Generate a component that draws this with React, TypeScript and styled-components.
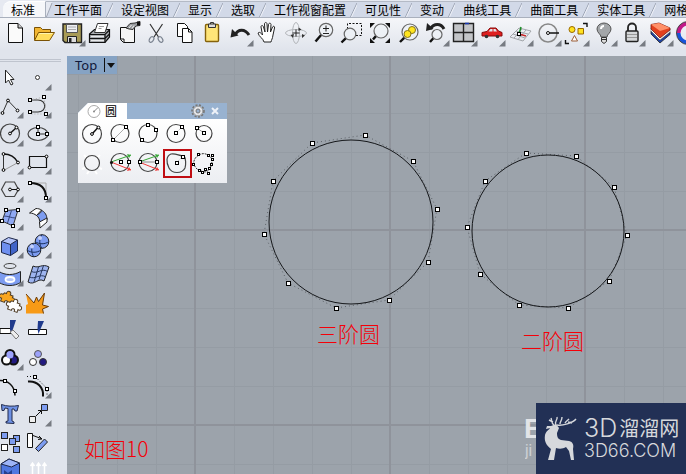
import React, { ReactNode } from "react";
import styled, { createGlobalStyle, css } from "styled-components";

const GlobalStyle = createGlobalStyle`
  * { box-sizing: border-box; }
  body {
    margin: 0;
    overflow: hidden;
    background: #e0e4ec;
    font-family: "Noto Sans CJK SC", "Noto Sans", sans-serif;
  }
  button {
    margin: 0;
    padding: 0;
    border: 0;
    background: none;
    font: inherit;
    color: inherit;
  }
`;

const Window = styled.div`
  display: flex;
  flex-direction: column;
  height: 100vh;
  overflow: hidden;
`;

const TabStrip = styled.nav`
  display: flex;
  flex: none;
  height: 18px;
  padding: 1px 0 0 3px;
  background: #e6e9f1;
  border-bottom: 1px solid #a9b0bd;
  overflow: hidden;
`;

const Tab = styled.button<{ $active: boolean }>`
  display: flex;
  flex: none;
  height: 17px;
  font-size: 12px;
  line-height: 16px;
  color: #000;
  white-space: nowrap;
  background: ${(p) => (p.$active ? "#f6f7fa" : "#d2d9e8")};
  border-top: 1px solid ${(p) => (p.$active ? "#fff" : "#b4bac6")};
  ${(p) =>
    p.$active &&
    css`
      border-right: 1px solid #a9b0bd;
      border-top-left-radius: 8px;
    `}
`;

const TabEdge = styled.svg<{ $width: number }>`
  flex: none;
  width: ${(p) => p.$width}px;
  height: 16px;
`;

const Toolbar = styled.div`
  display: flex;
  flex: none;
  height: 38px;
  padding: 1px 0 0 2px;
  overflow: hidden;
  background: linear-gradient(#f5f6f9, #e0e4ec 32px);
`;

const ToolButton = styled.button`
  flex: none;
  width: 28px;
  height: 28px;
`;

const Glyph = styled.svg`
  display: block;
  width: 28px;
  height: 28px;
  overflow: visible;
`;

const Body = styled.div`
  display: flex;
  flex: 1;
  min-height: 0;
`;

const Sidebar = styled.aside`
  flex: none;
  width: 67px;
  padding-top: 3px;
  overflow: hidden;
  background: #e0e4ec;
`;

const Grip = styled.div`
  width: 61px;
  height: 3px;
  margin-bottom: 1px;
  border: solid #bfc4ce;
  border-width: 1px 0;
`;

const ToolColumns = styled.div`
  display: grid;
  grid-template-columns: 28px 28px;
  margin-left: -4px;
`;

const Viewport = styled.main`
  position: relative;
  flex: 1;
  min-width: 0;
  overflow: hidden;
  background-color: #9ca3ab;
  background-image:
    repeating-linear-gradient(90deg, transparent 0 127px, #8f939b 127px 129px, transparent 129px 195px),
    repeating-linear-gradient(180deg, transparent 0 173px, #8f939b 173px 175px, transparent 175px 195px),
    repeating-linear-gradient(90deg, transparent 0 11px, #959ca4 11px 12px, transparent 12px 39px),
    repeating-linear-gradient(180deg, transparent 0 18px, #959ca4 18px 19px, transparent 19px 39px);
`;

const ViewTitle = styled.button`
  position: relative;
  z-index: 1;
  display: flex;
  align-items: center;
  gap: 7px;
  height: 18px;
  padding: 0 1px 0 8px;
  background: #86a3c4;
  color: #10183a;
  font: 13px/18px "Noto Sans", sans-serif;
`;

const Drawing = styled.svg`
  position: absolute;
  left: 0;
  top: 0;
  width: 619px;
  height: 418px;
`;

const Caption = styled.span<{ $x: number; $y: number }>`
  position: absolute;
  left: ${(p) => p.$x}px;
  top: ${(p) => p.$y}px;
  color: #f50008;
  font-size: 21px;
  font-weight: 300;
  line-height: 24px;
  white-space: nowrap;
`;

const Palette = styled.section`
  position: absolute;
  left: 11px;
  top: 47px;
  width: 149px;
  height: 80px;
  clip-path: polygon(10px 0, 100% 0, 100% 100%, 0 100%, 0 10px);
  background: linear-gradient(#fff 16px, #eceef2);
`;

const PaletteHeader = styled.header`
  display: flex;
  align-items: center;
  height: 16px;
  padding-right: 4px;
  background: #98b2d0;
`;

const PaletteTitle = styled.h2`
  display: flex;
  align-items: center;
  gap: 4px;
  width: 49px;
  height: 16px;
  margin: 0 auto 0 0;
  padding-left: 9px;
  background: #fff;
  font-size: 12px;
  font-weight: 400;
  line-height: 16px;
`;

const HeaderButton = styled.button`
  width: 17px;
  height: 16px;
  svg { display: block; margin: auto; }
`;

const PaletteGrid = styled.div`
  display: grid;
  grid-template-columns: repeat(5, 28px);
  row-gap: 1px;
  padding-top: 1px;
`;

const Watermark = styled.div`
  position: absolute;
  right: 0;
  bottom: 0;
  display: flex;
  align-items: center;
  gap: 5px;
  width: 150px;
  height: 71px;
  padding-left: 7px;
  background: #223055;
  color: #d6d8dc;
`;

const Brand = styled.div`
  display: flex;
  flex-direction: column;
  font-family: Inter, sans-serif;
  font-weight: 300;
  white-space: nowrap;
`;

const BrandName = styled.div`
  display: flex;
  align-items: center;
  gap: 2px;
  height: 24px;
  font-size: 25px;
  line-height: 24px;
`;

const BrandHan = styled.span`
  font-family: "Noto Sans CJK SC", sans-serif;
  font-size: 20px;
  font-weight: 400;
`;

const BrandSite = styled.div`
  font-size: 18px;
  line-height: 22px;
`;

const Ghost = styled.div`
  position: absolute;
  right: 150px;
  bottom: 14px;
  width: 11px;
  overflow: hidden;
  color: #e2e4e7;
  font-family: "Liberation Sans", sans-serif;
`;

const GhostBig = styled.div`
  font-size: 28px;
  font-weight: 700;
  line-height: 26px;
  margin-left: -1px;
`;

const GhostSmall = styled.div`
  font-size: 16px;
  line-height: 18px;
  opacity: 0.7;
`;

const K = "#111";
const BLUE = "#7d9cf0";

type Pt = [number, number];

const Squares = ({ at, s = 3 }: { at: Pt[]; s?: number }) => (
  <>
    {at.map(([x, y], i) => (
      <rect key={i} x={Math.round(x) - 1.5} y={Math.round(y) - 1.5} width={s} height={s} fill="#fff" stroke="#000" strokeWidth="1" />
    ))}
  </>
);

const Lens = ({ x, y, r, hx, hy }: { x: number; y: number; r: number; hx: number; hy: number }) => (
  <>
    <path d={`M${x - r * 0.7} ${y + r * 0.7}L${hx} ${hy}`} stroke="#111" strokeWidth="2.4" />
    <circle cx={x} cy={y} r={r} fill="#eef2f6" fillOpacity=".7" stroke="#666" strokeWidth="1.2" />
  </>
);

const Ring = ({ x = 14, y = 14, r = 9 }: { x?: number; y?: number; r?: number }) => (
  <circle cx={x} cy={y} r={r} stroke="#444" strokeWidth="1.2" />
);

type Tool = { name: string; art: ReactNode; menu?: boolean };

const ToolItem = ({ tool }: { tool: Tool }) => (
  <ToolButton type="button" aria-label={tool.name}>
    <Glyph viewBox="0 0 28 28" fill="none" aria-hidden="true">
      {tool.art}
      {tool.menu && <path d="M27.5 21v6.500h-6.500z" fill="#777b82" />}
    </Glyph>
  </ToolButton>
);

const standardTools: Tool[] = [
  { name: "新建", art: <><path d="M6.500 4.500h9.500l4.500 4.500v14.500h-14z" fill="#fafafa" stroke={K} /><path d="M16 4.500v4.500h4.500" fill="#ccc" stroke={K} /></> },
  { name: "打开", art: <><path d="M4.500 21V8.500h6l2 2h8v3" fill="#f2b632" stroke="#7b5205" /><path d="M4.500 21.500l4-8H24.500l-5 8z" fill="#ffdc5c" stroke="#7b5205" /><path d="M9.500 14.500h13" stroke="#fff4b0" /></> },
  { name: "保存", menu: true, art: <><path d="M5 5h18.500v18.500H7l-2-2z" fill="#a89b56" stroke="#222" strokeWidth="1.4" /><path d="M8.500 5.500h11v8h-11z" fill="#eef0f4" stroke="#555" /><path d="M10 8h8M10 10.500h8" stroke="#aaa" /><path d="M9.500 17.500h9v6h-9z" fill="#ddd" stroke="#222" /><path d="M11 19h2.500v4H11z" fill="#222" /></> },
  { name: "打印", art: <><path d="M3.500 15l5-4.500h15v7.500l-4.500 5.500h-15.500z" fill="#a9acb0" stroke={K} strokeWidth="1.2" /><path d="M8.500 13.500l3-9h10.500l-3 9z" fill="#fff" stroke="#333" /><path d="M13 7.500h5M12.500 9.500h3" stroke="#999" /><path d="M3.500 15.500h15.500l4.500-4.500M19 15.500v8M3.500 19.500h15.500l4.500-4.500" stroke={K} strokeWidth="1.2" /><path d="M5 17.500h13M5 21.500h13" stroke="#e8e9eb" /></> },
  { name: "文件属性", art: <><path d="M6.500 8.500h14v15h-11l-3-3z" fill="#f5f5f5" stroke={K} /><path d="M6.500 20h3.500v3.500" stroke={K} /><path d="M12 9l4-4.500 5-.5 5-1.500v4l-4 .5-3 3.500-4-.5z" fill="#999ca0" stroke="#333" /><path d="M15 9l2.500-3M18 9.500l2-3" stroke="#eee" /><path d="M24.500 2.500v4" stroke="#111" strokeWidth="3" /></> },
  { name: "剪切", art: <><path d="M8 5l8.500 13M20.500 5L12 18" stroke="#333" strokeWidth="1.2" /><ellipse cx="9.500" cy="20.500" rx="2" ry="3" transform="rotate(35 9.500 20.500)" stroke="#7d8592" strokeWidth="1.2" /><ellipse cx="18.500" cy="20.500" rx="2" ry="3" transform="rotate(-35 18.500 20.500)" stroke="#7d8592" strokeWidth="1.2" /></> },
  { name: "复制", art: <><path d="M7.500 4.500h7l3 3v10h-10z" fill="#fff" stroke={K} /><path d="M12.500 9.500h6l3.500 3.500v10.500h-9.500z" fill="#fff" stroke={K} /><path d="M18.500 9.500V13H22" stroke={K} /></> },
  { name: "粘贴", art: <><rect x="7.500" y="5.500" width="13" height="17" rx="1" fill="#ffe578" stroke="#85620b" strokeWidth="1.4" /><path d="M10.500 5h7v3.500h-7z" fill="#ddd" stroke="#333" /><path d="M12.500 5V3.500h3V5" stroke="#333" /></> },
  { name: "复原", menu: true, art: <><path d="M9 16C12 9.500 19 9.500 23 16" stroke="#222" strokeWidth="3" /><path d="M4.500 18.500l1.500-8.500 6.500 6.500z" fill="#222" /></> },
  { name: "平移", art: <path d="M10 23c-1-4-5-5-6-9 1.500-1.500 3 0 4.500 2L7 8c0-2 2-2 2.500 0l1.500 5-.5-8c0-2 2.500-2 2.500 0l.5 8 1-7.500c.5-2 2.500-1.500 2.500 0L16.500 13l2-5c1-1.500 2.500-.5 2 1l-1.500 7c-.5 4-1.500 4.500-2 7z" fill="#fff" stroke="#222" /> },
  { name: "旋转视图", art: <><ellipse cx="14" cy="14" rx="10.500" ry="3.500" stroke="#b2b5b9" /><ellipse cx="14" cy="14" rx="3.500" ry="10.500" stroke="#b2b5b9" /><path d="M14 10.500v7M10.500 14h7" stroke="#222" /><path d="M16.500 8.500l3 2-3 1.500zM8.500 16l3.500-1-1 4zM20 15v4l3-2.500z" fill="#333" /></> },
  { name: "缩放", art: <><Lens x={16} y={11} r={6.7} hx={5.5} hy={22.5} /><path d="M16 6.500v6M13 9.500h6M13 14.500h6" stroke="#222" /></> },
  { name: "框选缩放", art: <><path d="M9.500 10V4.500h14v12H18" stroke={K} strokeDasharray="2 1.500" /><Lens x={12} y={15} r={5.8} hx={3.5} hy={23.500} /></> },
  { name: "缩放至最大范围", art: <><Lens x={15} y={12} r={7} hx={7} hy={20.500} /><path d="M4 4h5l-5 5zM24 4v5l-5-5zM4 24v-5l5 5zM24 24h-5l5-5z" fill={K} /></> },
  { name: "缩放至选取", art: <><Lens x={16} y={13} r={8} hx={6} hy={23} /><circle cx="18" cy="11" r="3.500" fill="#ffe51e" stroke="#86751a" /><circle cx="13.500" cy="15" r="3.500" fill="#ffe51e" stroke="#86751a" /></> },
  { name: "复原视图", menu: true, art: <><path d="M8 10C12 4 19 4 22 10" stroke="#222" strokeWidth="3" /><path d="M4 12l1-8 6.500 6z" fill="#222" /><Lens x={15} y={15.500} r={5} hx={8} hy={23} /></> },
  { name: "四个视图", menu: true, art: <><path d="M3.500 4.500h20v18h-20z" fill="#c3c5c8" stroke="#222" strokeWidth="1.400" /><path d="M13.500 4.500v18M3.500 13.500h20" stroke="#222" strokeWidth="1.400" /><path d="M15 4.500h4" stroke="#1736b0" strokeWidth="1.500" /></> },
  { name: "设置视图", menu: true, art: <><path d="M4 13.500l5-1 3-3.500h6l2.500 3 3.500 1.500v3.500H4z" fill="#df2020" stroke="#860b0b" /><path d="M10.500 12.500l2-2.500h2v2.500zM15.500 10h2l1.500 2.500h-3.500z" fill="#dfe8f0" /><circle cx="8.500" cy="17.500" r="1.800" fill="#333" /><circle cx="19.500" cy="17.500" r="1.800" fill="#333" /></> },
  { name: "工作平面", menu: true, art: <><path d="M4 18l9-9 12 3-8 10zM7 15l12 4M10 12l12 3M8 19l8-9M12 20.500l8-9.500" stroke="#a2a6aa" /><path d="M13 15l2-7" stroke="#188b25" strokeWidth="1.500" /><path d="M13 15l7 2" stroke="#c62626" strokeWidth="1.500" /><Squares at={[[12.500, 15]]} /></> },
  { name: "对象捕捉", menu: true, art: <><circle cx="14" cy="14" r="9" stroke="#888" strokeWidth="1.500" /><path d="M14 14h11" stroke={K} strokeWidth="1.500" /><circle cx="14" cy="14" r="1.500" fill="#fff" stroke={K} /></> },
  { name: "选取", menu: true, art: <><circle cx="10" cy="10.500" r="3" fill="#ffe21f" stroke="#9a6900" /><path d="M16 9.500h5.500V15H16z" fill="#ffe21f" stroke="#9a6900" /><path d="M12.500 16.500l3 5.500h-6z" fill="#fff" stroke="#9a5d37" /><path d="M21 4.500h4v3.500M3.500 21v3.500H7" stroke={K} strokeWidth="1.400" /></> },
  { name: "隐藏物件", menu: true, art: <><path d="M11 18c0-3-4-4-4-8a7 6 0 0 1 14 0c0 4-4 5-4 8z" fill="#a3a6a9" stroke="#555" /><path d="M11 10a3 3 0 0 1 3-3" stroke="#fff" strokeWidth="2" /><path d="M11.500 18.500h5v4l-2.500 2-2.500-2z" fill="#ddd" stroke="#333" /><path d="M11.500 20.500h5" stroke="#333" /></> },
  { name: "锁定物件", menu: true, art: <><path d="M10 13V8.500a4 4 0 0 1 8 0V13" stroke="#222" strokeWidth="1.800" /><rect x="8" y="12" width="12" height="10.500" rx="1" fill="#d5d7d9" stroke="#222" strokeWidth="1.400" /><path d="M9 15.500h10M9 18.500h10" stroke="#999" /></> },
  { name: "图层", menu: true, art: <><path d="M5 12l9 9 10-8v2.500L14 24 5 15z" fill="#1e43a6" stroke="#222" strokeWidth=".8" /><path d="M5 9l9 9 10-8v3l-10 8-9-9z" fill="#fff" stroke="#555" strokeWidth=".5" /><path d="M5 5.500l8-1.500 11 5v2l-10 8-9-9z" fill="#e2401c" stroke="#7a1b10" strokeWidth=".8" /><path d="M5 5.500l8-1.500 11 5-10 3z" fill="#ff9068" /></> },
  { name: "颜色", art: <><path d="M14 4.500a9.500 9.500 0 0 0-9.500 9.500" stroke="#c21989" strokeWidth="4" /><path d="M4.500 14a9.500 9.500 0 0 0 9.500 9.500" stroke="#1754d9" strokeWidth="4" /><circle cx="14" cy="14" r="11.500" stroke="#444" /></> },
];

const sideTools: Tool[] = [
  { name: "取消选取", art: <path d="M9.500 7v13l3-3 2.500 5 2-1-2.500-4.500H18z" fill="#fff" stroke="#222" /> },
  { name: "点", menu: true, art: <circle cx="13.500" cy="14.500" r="2" fill="#fff" stroke="#333" /> },
  { name: "多重直线", menu: true, art: <><path d="M6.500 22L12 9.500l9.500 10" stroke="#333" /><Dots at={[[6.500, 22], [12, 9.500], [21.500, 19.500]]} /></> },
  { name: "曲线", menu: true, art: <><path d="M6 9h8c9 0 9 12 0 12H6" stroke="#333" strokeWidth="1.200" /><path d="M6 9l14-3 2 17H6" stroke="#aaa" strokeDasharray="1 2" /><Squares at={[[6, 9], [20, 6], [6, 21], [22, 23]]} /></> },
  { name: "圆", menu: true, art: <><Ring y={14.5} r={9.5} /><path d="M14 14.500l6.500-6" stroke={K} strokeWidth="1.400" /><Dots at={[[14, 14.500], [20.500, 8.500]]} /></> },
  { name: "椭圆", menu: true, art: <><ellipse cx="14" cy="15" rx="10" ry="6.500" stroke="#444" strokeWidth="1.200" /><path d="M14 8v7h9" stroke="#333" /><Squares at={[[14, 8], [14, 15], [23, 15]]} /></> },
  { name: "圆弧", menu: true, art: <><path d="M7.500 23.500V7" stroke="#333" /><path d="M7.500 7C14 7 19 10 22 15.500" stroke={K} strokeWidth="1.400" /><path d="M7.500 23.500l14.500-8" stroke="#999" /><Dots at={[[7.500, 7], [22, 15.500], [7.500, 23]]} /></> },
  { name: "矩形", menu: true, art: <><path d="M5.500 9.500h17v11h-17z" stroke={K} strokeWidth="1.200" /><Dots at={[[5.500, 20.500], [22.500, 9.500]]} /></> },
  { name: "多边形", menu: true, art: <><path d="M9.500 7h9l4 7.500-4 7h-9l-4-7z" stroke="#444" strokeWidth="1.200" /><path d="M14 14.500h7.500" stroke={K} /><Dots at={[[14, 14.500], [22, 14.500]]} /></> },
  { name: "曲线圆角", menu: true, art: <><path d="M6 8h16v15" stroke="#aaa" /><path d="M6 8c10 0 16 4 16 15" stroke={K} strokeWidth="2" /><Squares at={[[6, 8], [22, 23]]} /></> },
  { name: "曲面", menu: true, art: <><path d="M10 7c4 1 8-1 12 0l-5 16-11-5z" fill="#8fa8f2" stroke="#333" /><path d="M15.500 7.500L11.500 20M8 13c4 0 8 2 11.500 2" stroke="#37477c" /><Squares at={[[10, 7], [22, 7], [17, 23], [6, 18]]} /></> },
  { name: "混接曲面", menu: true, art: <><path d="M12 12c4-1 6-3 5-5 4 2 6 5 6 10l-7 4c0-4-1-7-4-9z" fill={BLUE} stroke="#222" /><path d="M5.500 10L12 5.500c2 0 4 .5 5.500 1.500l-5 5.500c-2-1.500-4-2.500-7-2.500zM15.500 19l7.500-4v4l-7 6z" fill="#fff" stroke="#222" /></> },
  { name: "立方体", menu: true, art: <Cube /> },
  { name: "球体", menu: true, art: <><circle cx="18" cy="10.500" r="6.800" fill={BLUE} stroke="#222" /><path d="M11 10.500c4 3 10 3 14 0M18 3.500c-3 4-3 10 0 14" stroke="#19305f" /><circle cx="16" cy="7" r="2" fill="#c3d0fa" /><circle cx="10" cy="19" r="6.800" fill={BLUE} stroke="#222" /><path d="M3 19c4 3 10 3 14 0M10 12c-3 4-3 10 0 14" stroke="#19305f" /><circle cx="8" cy="15.500" r="2" fill="#c3d0fa" /></> },
  { name: "投影曲线", menu: true, art: <><ellipse cx="14" cy="7" rx="6" ry="2.500" stroke="#444" /><path d="M3 12.500c6 4 15 4 21.500 0v11c-6 4-15 4-21.500 0z" fill={BLUE} stroke="#222" /><ellipse cx="14" cy="20.500" rx="4.500" ry="2.500" fill="#b8c8f8" stroke="#fff" strokeWidth="1.800" /></> },
  { name: "网格", menu: true, art: <><path d="M9 7c6 3 9-3 16 1l-5 14c-6-4-9 5-16 1z" fill="#9eb4ef" stroke="#222" /><path d="M14.500 8l-4.500 15M19.500 6.500L15 20.500M7.500 12.500c6 3 10-4 16 0M5.500 18c6 3 10-4 16.500 0" stroke="#26365c" /></> },
  { name: "组合", art: <><Puzzle x={11} y={11} fill="#f9a51e" /><Puzzle x={18} y={19} fill="#fff" /></> },
  { name: "炸开", art: <><path d="M2 26.500V18l2-1L2 7l8 9 2.500-6 2 4.500L20.500 6l-2 12 6 1.500-6 2.500 1 4.500z" fill="#f79a16" /><path d="M2 7l8 9 2.500-6 2 4.500L20.500 6l-2 12 6 1.500-6 2.500 1 4.500" stroke="#6b3b08" /></> },
  { name: "修剪", art: <><path d="M4 13.500h11v5H4z" fill="#fff" stroke={K} /><path d="M14 5h6l-4 12-2-2z" fill="#203b8d" /><path d="M14 17l3-2 6 6-3 3z" fill="#eee" stroke="#777" /></> },
  { name: "分割", art: <><path d="M4.500 14.500h18v5h-18z" fill="#fff" stroke={K} /><path d="M14 6h6l-3.500 8-2 5-1-5z" fill="#203b8d" /></> },
  { name: "群组", menu: true, art: <><circle cx="14" cy="11.500" r="4.500" fill="#9ca2fa" stroke={K} strokeWidth="2" /><circle cx="17.500" cy="17" r="4.500" fill="#221a80" stroke={K} strokeWidth="2" /><circle cx="10.500" cy="17" r="4.500" fill="#fff" stroke={K} strokeWidth="2" /><circle cx="14" cy="12" r="3.500" fill="#9ca2fa" /></> },
  { name: "解散群组", art: <><circle cx="14" cy="11" r="3.500" fill="#9ca2fa" stroke="#555" /><circle cx="9" cy="19" r="3.500" fill="#fff" stroke="#333" /><circle cx="19" cy="19" r="3.500" fill="#221a80" stroke="#333" /></> },
  { name: "编辑点", art: <><path d="M3 9.500c9-1 16 6 16 15" stroke={K} strokeWidth="1.500" /><Squares at={[[9, 10], [19, 20]]} /></> },
  { name: "控制点", menu: true, art: <><path d="M3 5.500h8l12 12v7" stroke={K} strokeDasharray="1 2" /><path d="M4 10.500c9-1 16 6 15 15" stroke={K} strokeWidth="2" /><Squares at={[[11, 6], [23, 18]]} /></> },
  { name: "文字", art: <path d="M5.500 5.500c5 2 12 2 17 1l-1.500 5.500h-2l-1-2h-2v12l2 1v1.500l-8-.5v-1.500l2-.5V9.500l-3-.5-1 2.500h-2z" fill="#6e91e4" stroke="#222b4c" /> },
  { name: "移动", menu: true, art: <><path d="M12 17l5-5M14 11.500h3.500V15" stroke={K} /><path d="M17.500 5.500h6v6h-6z" fill={BLUE} stroke="#222" /><path d="M5.500 17.500h6v6h-6z" fill="#eee" stroke="#222" /></> },
  { name: "阵列", art: <>{([[8.5, 8.5], [20.5, 11.5], [16.5, 14.5], [8.5, 20.5], [20.5, 22.5]] as Pt[]).map(([x, y], i) => <rect key={i} x={x - 3} y={y - 3} width="6" height="6" fill={i === 3 ? "#fff" : BLUE} stroke="#222" />)}</> },
  { name: "旋转", art: <><path d="M3.500 6.500h5v14h-5z" fill="#fff" stroke={K} /><path d="M9 8.500l8 3M14 12.500l4-.5-3-3" stroke={K} /><path d="M11.500 21.500l9-9.500 3 3-9 9.500z" fill={BLUE} stroke="#222" /></> },
  { name: "布尔运算", art: <><path d="M5 9l8-5 10.500 4v16H5z" fill="#4f77e0" stroke="#1d2748" /><path d="M5 9l8-5 10.500 4-8 4z" fill="#9db4f7" stroke="#1d2748" /><path d="M8 21v-6l4 3 4-3v6" fill="#24408f" /></> },
  { name: "分析方向", art: <path d="M8.500 20V9M14.500 20V9M20.500 20V9M6.500 11l2-3 2 3M12.500 11l2-3 2 3M18.500 11l2-3 2 3" stroke="#fff" strokeWidth="1.500" /> },
];

const circleTools: Tool[] = [
  { name: "中心点、半径", art: <><Ring r={9.5} /><path d="M14 14l6-6.500" stroke={K} strokeWidth="1.500" /><Dots at={[[14, 14], [20.500, 7.500]]} /></> },
  { name: "直径", art: <><Ring y={13.5} /><path d="M7 20L20 7" stroke="#aaa" /><Squares at={[[7, 20], [20, 7]]} /></> },
  { name: "三点", art: <><Ring y={13.5} /><Squares at={[[14, 5], [22, 10], [8, 20]]} /></> },
  { name: "环绕曲线", art: <><Ring y={13.5} /><path d="M14 13l6-6" stroke="#999" strokeDasharray="1 1" /><Squares at={[[14, 13], [20, 7]]} /></> },
  { name: "切线半径", art: <><Ring y={13.5} r={8} /><path d="M7 8l7 5" stroke="#999" /><Squares at={[[7, 8], [14, 13]]} /></> },
  { name: "正切三曲线", art: <><path d="M6 6l3 3M22 6l-3 3M4 20l3-1M24 20l-3-1M9 25l2-3M19 25l-2-3" stroke="#fff" strokeWidth="2" /><Ring r={7.5} /></> },
  { name: "可塑形直径", art: <><Ring y={13.5} /><path d="M5 13l20-7" stroke="#38a838" /><path d="M5 13l20 8" stroke="#f03838" /><path d="M25 6l-4-1 2 4z" fill="#38a838" /><path d="M25 21l-4 1 2-4z" fill="#f03838" /><circle cx="5.500" cy="13.500" r="1.500" fill={K} /><Squares at={[[15, 13], [23, 13]]} /></> },
  { name: "垂直直径", art: <><Ring y={13.5} /><path d="M5 13l20-7" stroke="#38a838" /><path d="M5 13l20 8" stroke="#f03838" /><path d="M25 6l-4-1 2 4z" fill="#38a838" /><path d="M25 21l-4 1 2-4z" fill="#f03838" /><path d="M6 13h17" stroke="#888" /><Squares at={[[6, 13], [23, 13]]} /></> },
  { name: "可塑形的圆", art: <><rect x="2" y="1" width="27" height="27" stroke="#c00d12" strokeWidth="2" /><path d="M9 5c5-1 8 2 13 2 2 2 2 9 1 12-3 6-13 6-16 0S4 7 9 5z" stroke="#444" strokeWidth="1.200" /><path d="M15 13l6-6" stroke="#aaa" strokeDasharray="1 1" /><Squares at={[[15, 14], [21, 8]]} /></> },
  { name: "配合点", art: <><path d="M9 6c3-2 7-2 10 1 4 2 3 7 2 10-2 6-6 7-10 5-3 0-5-3-7-6-1-4 1-8 5-10z" stroke="#333" strokeDasharray="2 1" /><Squares s={2} at={[[9, 6], [19, 7], [23, 7], [23, 11], [22, 16], [4, 16], [10, 22], [13, 24], [19, 25], [16, 21], [20, 20]]} /></> },
];

function Dots({ at }: { at: Pt[] }) {
  return <>{at.map(([x, y], i) => <circle key={i} cx={x} cy={y} r="1.400" fill="#fff" stroke="#000" />)}</>;
}

function Cube() {
  return (
    <>
      <path d="M5.500 10.500l9 3v11l-9-3z" fill="#6e8ff0" />
      <path d="M5.500 10.500l7-4 9 2.500-7 4.500z" fill="#b3c3f8" />
      <path d="M14.500 13.500l7-4.500v11l-7 4.500z" fill="#4164c8" />
      <path d="M5.500 10.500l7-4 9 2.500v11l-7 4.500-9-3zM5.500 10.500l9 3 7-4.500M14.500 13.500v11" stroke="#1d2748" />
    </>
  );
}

function Puzzle({ x, y, fill }: { x: number; y: number; fill: string }) {
  return (
    <path
      transform={`translate(${x} ${y}) rotate(20)`}
      d="M-4-4h2c-1-4 5-4 4 0h3v2c4-1 4 5 0 4v3H2c1-3-4-3-3 0h-4V2c-4 1-4-5 0-4z"
      fill={fill}
      stroke="#4d3b24"
    />
  );
}

const tabs = ["标准", "工作平面", "设定视图", "显示", "选取", "工作视窗配置", "可见性", "变动", "曲线工具", "曲面工具", "实体工具", "网格工具"];

const cubicPoints: Pt[] = [[365, 135], [413, 161], [437, 209], [428, 262], [389, 300], [336, 308], [288, 283], [264, 234], [273, 181], [312, 143]];
const quadraticPoints: Pt[] = [[526, 153], [576, 156], [614, 187], [627, 235], [609, 281], [568, 308], [519, 305], [480, 274], [467, 227], [485, 181]];

const Curve = ({ cx, cy, r, points }: { cx: number; cy: number; r: number; points: Pt[] }) => (
  <>
    <polygon points={points.map((p) => p.join()).join(" ")} stroke="#5d6268" strokeDasharray="1 3" />
    <circle cx={cx} cy={cy} r={r} stroke="#15171a" />
    {points.map(([x, y]) => (
      <rect key={`${x}-${y}`} x={x - 1.5} y={y - 1.5} width="4" height="4" fill="#fff" stroke="#000" />
    ))}
  </>
);

const Deer = () => (
  <svg width="36" height="46" viewBox="0 0 36 46" fill="#d6d8dc" aria-hidden="true">
    <path d="M8 10l5-2 3 4-2 5c0 4 1 6 4 7l8 1c4 1 5 4 4 8l1 11h-3l-2-9-3-4c-3 2-7 2-10 1l-2 12H5l3-11c-5-4-7-8-6-14 1-4 4-5 5-7L3 13l1-3z" />
    <path d="M11 9C8 7 9 4 8 2M13 9c-2-4 2-5 1-8M14 9c5 1 16-2 19-6M17 8c0-3 2-3 2-7M22 7c1-2 3-3 4-4M10 6L6 4M25 6l4 1" fill="none" stroke="#d6d8dc" strokeWidth="1.400" />
  </svg>
);

export default function App() {
  return (
    <Window>
      <GlobalStyle />
      <TabStrip>
        {tabs.map((label, i) => (
          <Tab key={label} type="button" $active={i === 0}>
            <TabEdge $width={8} viewBox="0 0 8 16">
              {i === 1 && <><path d="M0 16V0h6z" fill="#e6e9f1" /><path d="M0 16L6 1" stroke="#a0a7b4" /></>}
            </TabEdge>
            {label}
            <TabEdge $width={i === 0 ? 10 : 11} viewBox={i === 0 ? "0 0 10 16" : "0 0 11 16"}>
              {i > 0 && <><path d="M4 16L11 1" stroke="#9aa2b2" /><path d="M5 16l7-15" stroke="#eef1f7" /></>}
            </TabEdge>
          </Tab>
        ))}
      </TabStrip>
      <Toolbar>
        {standardTools.map((tool) => <ToolItem key={tool.name} tool={tool} />)}
      </Toolbar>
      <Body>
        <Sidebar>
          <Grip />
          <ToolColumns>
            {sideTools.map((tool) => <ToolItem key={tool.name} tool={tool} />)}
          </ToolColumns>
        </Sidebar>
        <Viewport>
          <ViewTitle type="button">
            Top
            <svg width="12" height="16" viewBox="0 0 12 16" aria-hidden="true">
              <path d="M.5 1v14" stroke="#111" />
              <path d="M3 6h8l-4 5z" fill="#111" />
            </svg>
          </ViewTitle>
          <Drawing viewBox="67 56 619 418" fill="none" aria-hidden="true">
            <Curve cx={351} cy={222} r={82} points={cubicPoints} />
            <Curve cx={548} cy={231} r={76} points={quadraticPoints} />
          </Drawing>
          <Caption $x={250} $y={265}>三阶圆</Caption>
          <Caption $x={454} $y={272}>二阶圆</Caption>
          <Caption $x={17} $y={380}>如图10</Caption>
          <Palette>
            <PaletteHeader>
              <PaletteTitle>
                <svg width="14" height="14" viewBox="0 0 14 14" fill="none" aria-hidden="true">
                  <circle cx="7" cy="7.500" r="6" stroke="#aaa" />
                  <path d="M7 7.500l4-4" stroke="#888" />
                  <circle cx="7" cy="7.500" r="1" fill="#888" />
                </svg>
                圆
              </PaletteTitle>
              <HeaderButton type="button" aria-label="选项">
                <svg width="14" height="14" viewBox="0 0 14 14" fill="none" aria-hidden="true">
                  <circle cx="7" cy="7" r="5.800" stroke="#777" strokeWidth="2" strokeDasharray="2 1.450" />
                  <circle cx="7" cy="7" r="4.800" fill="#e4e5e7" stroke="#9a9c9f" />
                  <circle cx="7" cy="7" r="2" fill="#98b2d0" stroke="#777" />
                </svg>
              </HeaderButton>
              <HeaderButton type="button" aria-label="关闭">
                <svg width="8" height="8" viewBox="0 0 8 8" aria-hidden="true">
                  <path d="M1 1l6 6M7 1L1 7" stroke="#eef2f8" strokeWidth="2" />
                </svg>
              </HeaderButton>
            </PaletteHeader>
            <PaletteGrid>
              {circleTools.map((tool) => <ToolItem key={tool.name} tool={tool} />)}
            </PaletteGrid>
          </Palette>
          <Ghost>
            <GhostBig>E</GhostBig>
            <GhostSmall>ji</GhostSmall>
          </Ghost>
          <Watermark>
            <Deer />
            <Brand>
              <BrandName>3D<BrandHan>溜溜网</BrandHan></BrandName>
              <BrandSite>3D66.COM</BrandSite>
            </Brand>
          </Watermark>
        </Viewport>
      </Body>
    </Window>
  );
}
